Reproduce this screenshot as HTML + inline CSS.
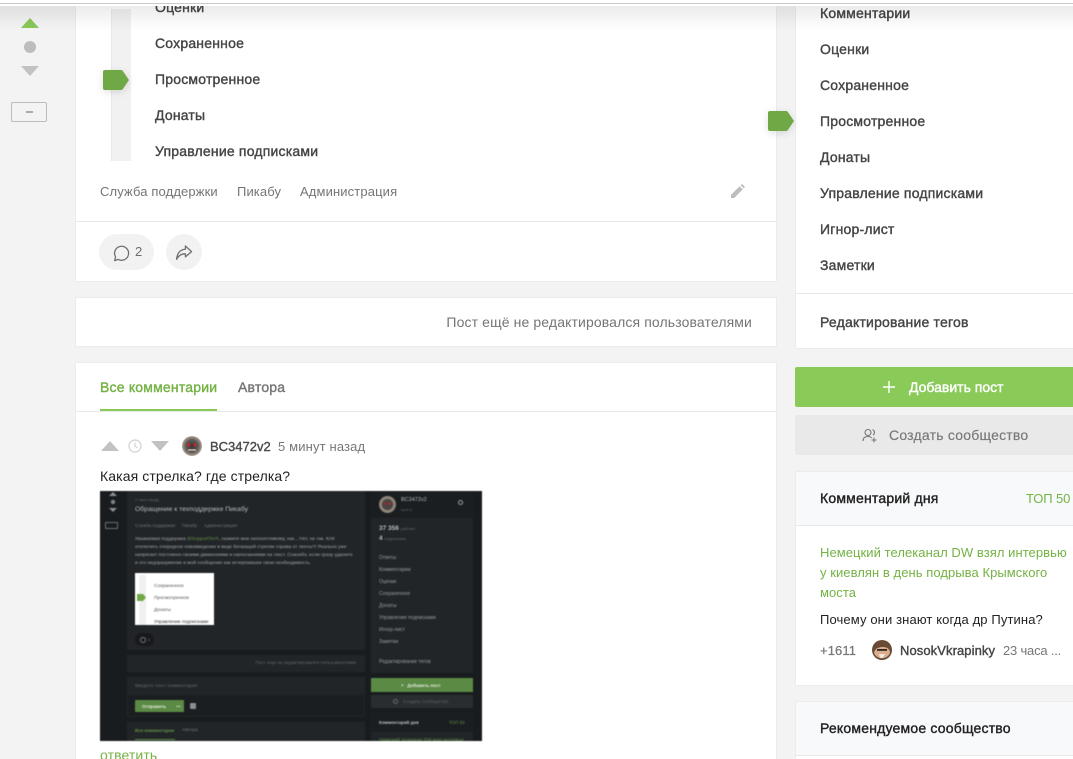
<!DOCTYPE html>
<html lang="ru"><head><meta charset="utf-8"><title>Комментарии</title>
<style>
html,body{margin:0;padding:0;background:#f3f3f3;overflow:hidden}
#p{position:relative;width:1073px;height:759px;overflow:hidden;background:#f3f3f3;font-family:"Liberation Sans",sans-serif;color:#3c3c3c}
#p div,#p svg{position:absolute}
#p .t{position:absolute;white-space:nowrap;line-height:18px;font-size:14px}
.m{-webkit-text-stroke:.38px currentColor;color:#444;letter-spacing:.2px}
.c{background:#fff;border:1px solid #ececec;box-sizing:border-box}
#p .d{position:absolute;white-space:nowrap;font-size:5px;line-height:7px;color:#8b8e90}
.b{background:#222528}
</style></head><body><div id="p">

<!-- left rail -->
<svg style="left:21px;top:18px" width="18" height="10"><path d="M9 0L18 10H0Z" fill="#8ac858"/></svg>
<div style="left:24px;top:41px;width:12px;height:12px;border-radius:50%;background:#bdbdbd"></div>
<svg style="left:21px;top:66px" width="18" height="10"><path d="M0 0H18L9 10Z" fill="#c2c2c2"/></svg>
<div style="left:11px;top:102px;width:36px;height:20px;border:1px solid #bcbcbc;border-radius:2px;box-sizing:border-box"></div>
<div style="left:26px;top:111px;width:7px;height:2px;background:#aaa"></div>

<!-- post card -->
<div class="c" style="left:75px;top:0;width:702px;height:282px;border-top:none"></div>
<div style="left:111px;top:9px;width:20px;height:152px;background:#f1f1f1;border-left:1px solid #e9e9e9;box-sizing:border-box"></div>
<div class="t m" style="left:155px;top:-2px;">Оценки</div>
<div class="t m" style="left:155px;top:34px;">Сохраненное</div>
<div class="t m" style="left:155px;top:70px;">Просмотренное</div>
<div class="t m" style="left:155px;top:106px;">Донаты</div>
<div class="t m" style="left:155px;top:142px;">Управление подписками</div>
<svg style="left:103px;top:70px;filter:drop-shadow(0 2px 4px rgba(0,0,0,.12))" width="26" height="20"><path d="M2 0H18Q19.500 0 20.500 2L26 10L20.500 18Q19.500 20 18 20H2Q0 20 0 18V2Q0 0 2 0Z" fill="#6fa845"/></svg>
<div class="t" style="left:100px;top:183px;color:#757575;font-size:13px;letter-spacing:.13px">Служба поддержки</div>
<div class="t" style="left:237px;top:183px;color:#757575;font-size:13px;letter-spacing:.1px">Пикабу</div>
<div class="t" style="left:300px;top:183px;color:#757575;font-size:13px;letter-spacing:.13px">Администрация</div>
<svg style="left:731px;top:184px" width="14" height="14" viewBox="0 0 14 14"><path d="M0 14V10.800L8.600 2.200L11.800 5.400L3.200 14ZM9.600 1.200L10.600 .3Q11 0 11.400 .3L13.700 2.600Q14 3 13.700 3.400L12.800 4.400Z" fill="#bdbdbd"/></svg>
<div style="left:76px;top:221px;width:700px;height:1px;background:#e8e8e8"></div>
<div style="left:99px;top:234px;width:55px;height:36px;border-radius:18px;background:#f2f2f2"></div>
<svg style="left:112px;top:244px" width="18" height="18" viewBox="0 0 18 18"><path d="M2.600 16.600L3.600 12.900A7 7 0 1 1 6.200 15.400Z" fill="none" stroke="#707070" stroke-width="1.300" stroke-linejoin="round"/></svg>
<div class="t" style="left:135px;top:243px;font-size:13px;color:#6d6d6d">2</div>
<div style="left:166px;top:234px;width:36px;height:36px;border-radius:50%;background:#f2f2f2"></div>
<svg style="left:175px;top:245px" width="18" height="16" viewBox="0 0 18 17"><path d="M10.500 1L17 7L10.500 12.600V9.400C6.500 9.200 3.600 10.600 1.200 15.200C1.600 9 4.600 5 10.500 4.400Z" fill="none" stroke="#707070" stroke-width="1.400" stroke-linejoin="round"/></svg>

<!-- edit card -->
<div class="c" style="left:75px;top:297px;width:702px;height:50px"></div>
<div class="t" style="right:321px;top:313px;color:#757575;font-size:14px;letter-spacing:.12px">Пост ещё не редактировался пользователями</div>

<!-- comments card -->
<div class="c" style="left:75px;top:362px;width:702px;height:397px;border-bottom:none"></div>
<div class="t m" style="left:100px;top:378px;color:#74b244">Все комментарии</div>
<div class="t m" style="left:238px;top:378px;color:#757575">Автора</div>
<div style="left:100px;top:409px;width:117px;height:2px;background:#8ac858"></div>
<div style="left:76px;top:411px;width:700px;height:1px;background:#e8e8e8"></div>

<svg style="left:101px;top:441px" width="18" height="10"><path d="M9 0L18 10H0Z" fill="#c2c2c2"/></svg>
<svg style="left:128px;top:439px" width="14" height="14" viewBox="0 0 14 14"><circle cx="7" cy="7" r="6" fill="none" stroke="#d0d0d0" stroke-width="1.200"/><path d="M7 3.500V7.200L9.500 8.600" fill="none" stroke="#d0d0d0" stroke-width="1.100"/></svg>
<svg style="left:151px;top:441px" width="18" height="10"><path d="M0 0H18L9 10Z" fill="#c2c2c2"/></svg>
<svg style="left:182px;top:436px" width="20" height="20" viewBox="0 0 20 20"><defs><radialGradient id="g1"><stop offset="0" stop-color="#3a3433"/><stop offset=".6" stop-color="#5f5956"/><stop offset=".85" stop-color="#8d857b"/><stop offset="1" stop-color="#b8ad9f"/></radialGradient></defs><circle cx="10" cy="10" r="10" fill="url(#g1)"/><circle cx="6.800" cy="9" r="1.600" fill="#c2262c"/><circle cx="13" cy="9" r="1.600" fill="#c2262c"/><rect x="6" y="13" width="8" height="2" fill="#a89e94"/></svg>
<div class="t m" style="left:210px;top:438px;color:#4a4a4a;font-size:13px;letter-spacing:0">BC3472v2</div>
<div class="t" style="left:278px;top:438px;color:#777;font-size:13px;letter-spacing:.15px">5 минут назад</div>
<div class="t" style="left:100px;top:467px;color:#222;font-size:14px;letter-spacing:.11px">Какая стрелка? где стрелка?</div>

<!-- embedded dark screenshot -->
<div style="left:100px;top:491px;width:382px;height:250px;background:#191c1f;overflow:hidden;filter:blur(.4px)">
  <div class="b" style="left:27px;top:0;width:238px;height:159px"></div>
  <div class="b" style="left:27px;top:164px;width:238px;height:17px"></div>
  <div class="b" style="left:27px;top:186px;width:238px;height:40px"></div>
  <div style="left:28px;top:204px;width:236px;height:21px;background:#1b1e20"></div>
  <div class="b" style="left:27px;top:231px;width:238px;height:19px"></div>
  <div class="b" style="left:271px;top:0;width:102px;height:182px"></div>
  <div style="left:271px;top:0;width:102px;height:27px;background:#1b1e21"></div>
  <div style="left:271px;top:187px;width:102px;height:14px;background:#5a8a44"></div>
  <div style="left:271px;top:204px;width:102px;height:13px;background:#2a2d30"></div>
  <div class="b" style="left:271px;top:222px;width:102px;height:28px"></div>
  <div style="left:271px;top:222px;width:102px;height:19px;background:#1b1e21"></div>

  <svg style="left:8px;top:0" width="10" height="24"><path d="M5 1L9 5H1Z" fill="#8d8f91"/><circle cx="5" cy="11" r="2.200" fill="#7d7f81"/><path d="M1 17H9L5 21Z" fill="#8d8f91"/></svg>
  <div style="left:5px;top:31px;width:13px;height:7px;border:1px solid #6b6d70;border-radius:1px;box-sizing:border-box"></div>
  <div class="d" style="left:35px;top:5px;font-size:4px;color:#666">2 часа назад</div>
  <div class="d" style="left:35px;top:14px;font-size:6.800px;line-height:9px;color:#b8babc">Обращение к техподдержке Пикабу</div>
  <div class="d" style="left:35px;top:31px;font-size:4.500px;color:#6f7173">Служба поддержки</div>
  <div class="d" style="left:82px;top:31px;font-size:4.500px;color:#6f7173">Пикабу</div>
  <div class="d" style="left:104px;top:31px;font-size:4.500px;color:#6f7173">Администрация</div>
  <div class="d" style="left:35px;top:45px;font-size:4.800px;color:#a2a4a6">Уважаемая поддержка <span style="color:#5f8f45">@SupportTech</span>, скажите мне непонятливому, как... Нет, не так. КАК</div>
  <div class="d" style="left:35px;top:53px;font-size:4.800px;color:#a2a4a6">отключить очередное нововведение в виде бегающей стрелки справа от ленты?! Реально уже</div>
  <div class="d" style="left:35px;top:61px;font-size:4.800px;color:#a2a4a6">напрягает постоянно своими движениями и наползаниями на текст. Спасибо, если сразу удалите</div>
  <div class="d" style="left:35px;top:69px;font-size:4.800px;color:#a2a4a6">и это недоразумение и мой сообщение как исчерпавшее свою необходимость.</div>

  <div style="left:35px;top:82px;width:79px;height:52px;background:#fff;overflow:hidden">
    <div style="left:4px;top:2px;width:7px;height:50px;background:#f0f0f0"></div>
    <div class="d" style="left:19px;top:10px;font-size:4.800px;color:#555">Сохраненное</div>
    <div class="d" style="left:19px;top:22px;font-size:4.800px;color:#555">Просмотренное</div>
    <div class="d" style="left:19px;top:34px;font-size:4.800px;color:#555">Донаты</div>
    <div class="d" style="left:19px;top:46px;font-size:4.800px;color:#333">Управление подписками</div>
    <svg style="left:2px;top:21px" width="9" height="7"><path d="M0 0H6L9 3.500L6 7H0Z" fill="#6fa845"/></svg>
  </div>

  <div style="left:35px;top:142px;width:19px;height:13px;border-radius:7px;background:#17191c"></div>
  <div style="left:40px;top:146px;width:4px;height:4px;border:1px solid #77797c;border-radius:50%"></div>
  <div class="d" style="left:48px;top:145px;font-size:4px;color:#77797c">1</div>
  <div class="d" style="right:126px;top:168px;color:#626466;font-size:4.700px">Пост ещё не редактировался пользователями</div>
  <div class="d" style="left:35px;top:192px;color:#626466;font-size:4.800px">Введите текст комментария</div>
  <div style="left:35px;top:209px;width:49px;height:12px;background:#5a8a44;border-radius:1px"></div>
  <div class="d" style="left:42px;top:212px;color:#e2e8dc;font-size:4.500px;font-weight:bold">Отправить</div>
  <div class="d" style="left:76px;top:212px;color:#cfd8c8;font-size:4.500px">•••</div>
  <div style="left:90px;top:212px;width:6px;height:6px;background:#8b8d90;border-radius:1px"></div>
  <div class="d" style="left:35px;top:236px;color:#5f8f45;font-size:4.500px;font-weight:bold">Все комментарии</div>
  <div class="d" style="left:82px;top:236px;color:#6f7173;font-size:4.800px">Автора</div>
  <div style="left:35px;top:248px;width:40px;height:1px;background:#5a8a44"></div>

  <svg style="left:279px;top:5px" width="17" height="17" viewBox="0 0 20 20"><circle cx="10" cy="10" r="10" fill="#8c8478"/><circle cx="10" cy="10" r="6.500" fill="#4a4442"/><circle cx="7" cy="9" r="1.400" fill="#b3262c"/><circle cx="13" cy="9" r="1.400" fill="#b3262c"/></svg>
  <div class="d" style="left:301px;top:6px;color:#b8babc;font-size:5.500px">BC3472v2</div>
  <div class="d" style="left:301px;top:15px;color:#55585a;font-size:4px">выйти</div>
  <div style="left:358px;top:9px;width:3px;height:3px;border:1.500px solid #9b9da0;border-radius:50%"></div>
  <div class="d" style="left:279px;top:33px;color:#b8babc;font-size:6.500px;line-height:9px;font-weight:bold">37 356 <span style="font-size:4px;font-weight:normal;color:#666">рейтинг</span></div>
  <div class="d" style="left:279px;top:43px;color:#b8babc;font-size:6.500px;line-height:9px;font-weight:bold">4 <span style="font-size:4px;font-weight:normal;color:#666">подписчика</span></div>
  <div class="d" style="left:279px;top:64px;color:#999b9d">Ответы</div>
  <div class="d" style="left:279px;top:76px;color:#999b9d">Комментарии</div>
  <div class="d" style="left:279px;top:88px;color:#999b9d">Оценки</div>
  <div class="d" style="left:279px;top:100px;color:#999b9d">Сохраненное</div>
  <div class="d" style="left:279px;top:112px;color:#999b9d">Донаты</div>
  <div class="d" style="left:279px;top:124px;color:#999b9d">Управление подписками</div>
  <div class="d" style="left:279px;top:136px;color:#999b9d">Игнор-лист</div>
  <div class="d" style="left:279px;top:148px;color:#999b9d">Заметки</div>
  <div class="d" style="left:279px;top:168px;color:#999b9d">Редактирование тегов</div>
  <div class="d" style="left:301px;top:191px;color:#e2e8dc;font-size:4.500px;font-weight:bold">+&nbsp;&nbsp;&nbsp;Добавить пост</div>
  <div style="left:293px;top:208px;width:5px;height:5px;border:1px solid #66686a;border-radius:50%;box-sizing:border-box"></div>
  <div class="d" style="left:303px;top:207px;color:#5e6163;font-size:4.700px">Создать сообщество</div>
  <div class="d" style="left:279px;top:228px;color:#b8babc;font-size:4.500px;font-weight:bold">Комментарий дня</div>
  <div class="d" style="left:349px;top:228px;color:#5f8f45;font-size:4.500px">ТОП 50</div>
  <div class="d" style="left:279px;top:245px;color:#5f8f45;font-size:4.500px">Немецкий телеканал DW взял интервью</div>
</div>
<div style="left:100px;top:746px;width:80px;height:13px;overflow:hidden"><div class="t" style="left:0;top:0;color:#74b244;font-size:14px;letter-spacing:.1px">ответить</div></div>

<!-- right sidebar -->
<div class="c" style="left:795px;top:0;width:278px;height:349px;border-top:none;border-right:none"></div>
<div class="t m" style="left:820px;top:4px;">Комментарии</div>
<div class="t m" style="left:820px;top:40px;">Оценки</div>
<div class="t m" style="left:820px;top:76px;">Сохраненное</div>
<div class="t m" style="left:820px;top:112px;">Просмотренное</div>
<div class="t m" style="left:820px;top:148px;">Донаты</div>
<div class="t m" style="left:820px;top:184px;">Управление подписками</div>
<div class="t m" style="left:820px;top:220px;">Игнор-лист</div>
<div class="t m" style="left:820px;top:256px;">Заметки</div>
<div style="left:796px;top:293px;width:277px;height:1px;background:#e8e8e8"></div>
<div class="t m" style="left:820px;top:313px;">Редактирование тегов</div>
<svg style="left:768px;top:111px;filter:drop-shadow(0 2px 4px rgba(0,0,0,.12))" width="26" height="20"><path d="M2 0H18Q19.500 0 20.500 2L26 10L20.500 18Q19.500 20 18 20H2Q0 20 0 18V2Q0 0 2 0Z" fill="#6fa845"/></svg>

<div style="left:795px;top:367px;width:278px;height:40px;background:#8aca59;border-radius:2px 0 0 2px"></div>
<svg style="left:883px;top:381px" width="12" height="12"><path d="M6 0V12M0 6H12" stroke="#fff" stroke-width="1.400"/></svg>
<div class="t" style="left:909px;top:378px;color:#fff;font-size:14px;-webkit-text-stroke:.4px #fff">Добавить пост</div>
<div style="left:795px;top:415px;width:278px;height:40px;background:#e9e9e9;border-radius:2px 0 0 2px"></div>
<svg style="left:862px;top:428px" width="16" height="15" viewBox="0 0 16 15" fill="none" stroke="#777" stroke-width="1.100"><circle cx="6" cy="4.500" r="3"/><path d="M1 13C1 9.800 3 8.500 6 8.500C7.500 8.500 8.800 9 9.600 9.800M10.500 1.600A3 3 0 0 1 11 7M12 9.500V14.500M9.500 12H14.500"/></svg>
<div class="t" style="left:889px;top:426px;color:#777;font-size:14px;letter-spacing:.22px;-webkit-text-stroke:.15px #777">Создать сообщество</div>

<div class="c" style="left:795px;top:471px;width:278px;height:215px;border-right:none"></div>
<div style="left:796px;top:472px;width:277px;height:54px;background:#f8f9fb;border-bottom:1px solid #e8e8e8;box-sizing:border-box"></div>
<div class="t" style="left:820px;top:489px;color:#222;font-size:14px;-webkit-text-stroke:.38px #222;letter-spacing:.2px">Комментарий дня</div>
<div class="t" style="left:1026px;top:490px;color:#74b244;font-size:13px;letter-spacing:-.1px">ТОП 50</div>
<div class="t" style="left:820px;top:543px;color:#74b244;font-size:13px;line-height:20px;white-space:nowrap;letter-spacing:.06px">Немецкий телеканал DW взял интервью<br>у киевлян в день подрыва Крымского<br>моста</div>
<div class="t" style="left:820px;top:611px;color:#222;font-size:13px;letter-spacing:.12px">Почему они знают когда др Путина?</div>
<div class="t" style="left:820px;top:642px;color:#777;font-size:13px;-webkit-text-stroke:.25px #777;letter-spacing:.1px">+1611</div>
<svg style="left:872px;top:640px" width="20" height="20" viewBox="0 0 20 20"><circle cx="10" cy="10" r="10" fill="#6a4a35"/><path d="M2 13C3 8 7 7 11 7C15 7 18 9 18 13C15 20 5 20 2 13Z" fill="#d8ae8e"/><rect x="5" y="9" width="10" height="1.800" fill="#2c2420"/><path d="M7 14H13L11 18H8Z" fill="#efe6dc"/></svg>
<div class="t m" style="left:900px;top:642px;font-size:13px;letter-spacing:.08px">NosokVkrapinky</div>
<div class="t" style="left:1003px;top:642px;color:#777;font-size:13px;letter-spacing:-.2px">23 часа ...</div>

<div class="c" style="left:795px;top:701px;width:278px;height:58px;border-right:none;border-bottom:none"></div>
<div style="left:796px;top:702px;width:277px;height:53px;background:#f8f9fb;border-bottom:1px solid #e8e8e8"></div>
<div class="t" style="left:820px;top:719px;color:#222;font-size:14px;-webkit-text-stroke:.38px #222;letter-spacing:.2px">Рекомендуемое сообщество</div>

<!-- top bar overlay -->
<div style="left:0;top:6px;width:1073px;height:24px;background:linear-gradient(#ebebeb,#fff);mix-blend-mode:multiply"></div>
<div style="left:0;top:0;width:1073px;height:3px;background:#fff"></div>
<div style="left:0;top:3px;width:1073px;height:1px;background:#c9c9ce"></div>
<div style="left:0;top:4px;width:1073px;height:2px;background:#fff"></div>
</div></body></html>
